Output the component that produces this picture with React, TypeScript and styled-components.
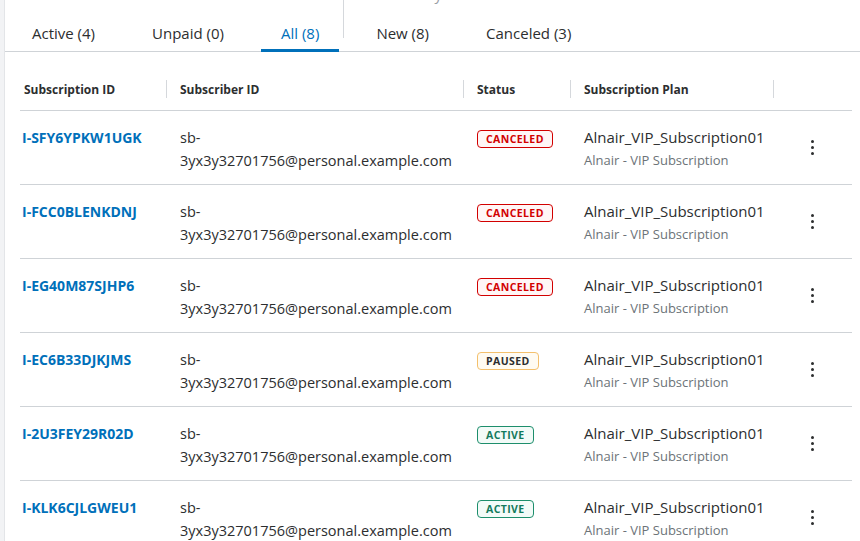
import styled, { createGlobalStyle } from "styled-components";

const GlobalStyle = createGlobalStyle`
  html, body {
    margin: 0;
    padding: 0;
    background: #f2f3f5;
    font-family: "Open Sans", "Liberation Sans", sans-serif;
    color: #2c2e2f;
  }
`;

const Page = styled.div`
  position: relative;
  margin-left: 4px;
  background: #ffffff;
  border-left: 1px solid #e3e5e8;
  min-height: 541px;
  overflow: hidden;
`;

// summary strip above the tabs, scrolled mostly out of view
const Summary = styled.div`
  position: absolute;
  top: 0;
  left: 0;
  display: flex;
  height: 38px;
  pointer-events: none;
`;

const SummaryItem = styled.div<{ $width: number; $divider?: boolean }>`
  width: ${p => p.$width}px;
  padding-left: ${p => (p.$divider ? 39 : 38)}px;
  border-left: ${p => (p.$divider ? "1px solid #d5d8dc" : "none")};
  box-sizing: border-box;
  font-size: 15px;
  color: #9aa0a6;
  line-height: 15px;
  margin-top: -13px;
  height: 51px;
`;

const TabBar = styled.div`
  display: flex;
  gap: 17px;
  padding-left: 7px;
  height: 51px;
  border-bottom: 1px solid #cfd3d7;
`;

const Tab = styled.div<{ $active?: boolean }>`
  display: flex;
  align-items: center;
  padding: 16px 20px 0;
  font-size: 15px;
  color: ${p => (p.$active ? "#0070ba" : "#2c2e2f")};
  border-bottom: 3px solid ${p => (p.$active ? "#0070ba" : "transparent")};
  margin-bottom: -1px;
  box-sizing: border-box;
  white-space: nowrap;
`;

const Table = styled.div`
  margin: 16px 8px 0 15px;
`;

const Row = styled.div<{ $head?: boolean }>`
  display: grid;
  grid-template-columns: 146px 297px 107px 203px 79px;
  border-bottom: 1px solid #cfd3d7;
  height: ${p => (p.$head ? 42 : 73)}px;
  align-items: ${p => (p.$head ? "center" : "stretch")};
`;

const HeadCell = styled.div<{ $first?: boolean; $divider?: boolean }>`
  display: flex;
  align-items: center;
  height: 18px;
  padding-left: ${p => (p.$first ? 4 : 13)}px;
  border-left: ${p => (p.$divider ? "1px solid #d5d8dc" : "none")};
  font-size: 12px;
  font-weight: 700;
  color: #2c2e2f;
  white-space: nowrap;
`;

const Cell = styled.div<{ $first?: boolean }>`
  padding: 15px 0 0 ${p => (p.$first ? 2 : 14)}px;
  line-height: 23px;
  font-size: 14.5px;
`;

const IdLink = styled.a`
  color: #0070ba;
  font-weight: 700;
  font-size: 14px;
  text-decoration: none;
`;

const badgeColors = {
  CANCELED: { fg: "#d20000", border: "#d20000", bg: "#fff6f6" },
  PAUSED: { fg: "#2c2e2f", border: "#f4c06c", bg: "#fffbf2" },
  ACTIVE: { fg: "#137a5c", border: "#1d8e6c", bg: "#f3fbf8" },
};

type Status = keyof typeof badgeColors;

const Badge = styled.span<{ $status: Status }>`
  display: inline-flex;
  align-items: center;
  height: 18px;
  padding: 0 8px;
  box-sizing: border-box;
  border-radius: 4px;
  border: 1px solid ${p => badgeColors[p.$status].border};
  background: ${p => badgeColors[p.$status].bg};
  color: ${p => badgeColors[p.$status].fg};
  font-size: 10.5px;
  font-weight: 700;
  letter-spacing: 0.4px;
  vertical-align: middle;
`;

const PlanName = styled.div`
  font-size: 15px;
`;

const PlanSub = styled.div`
  font-size: 13px;
  color: #6c7378;
`;

const ActionCell = styled.div`
  display: flex;
  align-items: center;
  justify-content: center;
`;

const Kebab = styled.button`
  display: flex;
  flex-direction: column;
  gap: 3px;
  border: none;
  background: none;
  padding: 4px 8px;
  cursor: pointer;
  span {
    width: 3px;
    height: 3px;
    border-radius: 50%;
    background: #2c2e2f;
  }
`;

const tabs = [
  { label: "Active (4)" },
  { label: "Unpaid (0)" },
  { label: "All (8)", active: true },
  { label: "New (8)" },
  { label: "Canceled (3)" },
];

const rows: { id: string; status: Status }[] = [
  { id: "I-SFY6YPKW1UGK", status: "CANCELED" },
  { id: "I-FCC0BLENKDNJ", status: "CANCELED" },
  { id: "I-EG40M87SJHP6", status: "CANCELED" },
  { id: "I-EC6B33DJKJMS", status: "PAUSED" },
  { id: "I-2U3FEY29R02D", status: "ACTIVE" },
  { id: "I-KLK6CJLGWEU1", status: "ACTIVE" },
];

export default function App() {
  return (
    <>
      <GlobalStyle />
      <Page>
        <Summary>
          <SummaryItem $width={338}>Total</SummaryItem>
          <SummaryItem $width={300} $divider>Recently</SummaryItem>
        </Summary>
        <TabBar>
          {tabs.map(t => (
            <Tab key={t.label} $active={t.active}>
              {t.label}
            </Tab>
          ))}
        </TabBar>
        <Table>
          <Row $head>
            <HeadCell $first>Subscription ID</HeadCell>
            <HeadCell $divider>Subscriber ID</HeadCell>
            <HeadCell $divider>Status</HeadCell>
            <HeadCell $divider>Subscription Plan</HeadCell>
            <HeadCell $divider />
          </Row>
          {rows.map(r => (
            <Row key={r.id}>
              <Cell $first>
                <IdLink href="#">{r.id}</IdLink>
              </Cell>
              <Cell>
                sb-
                <br />
                3yx3y32701756@personal.example.com
              </Cell>
              <Cell>
                <Badge $status={r.status}>{r.status}</Badge>
              </Cell>
              <Cell>
                <PlanName>Alnair_VIP_Subscription01</PlanName>
                <PlanSub>Alnair - VIP Subscription</PlanSub>
              </Cell>
              <ActionCell>
                <Kebab aria-label="More actions">
                  <span />
                  <span />
                  <span />
                </Kebab>
              </ActionCell>
            </Row>
          ))}
        </Table>
      </Page>
    </>
  );
}
